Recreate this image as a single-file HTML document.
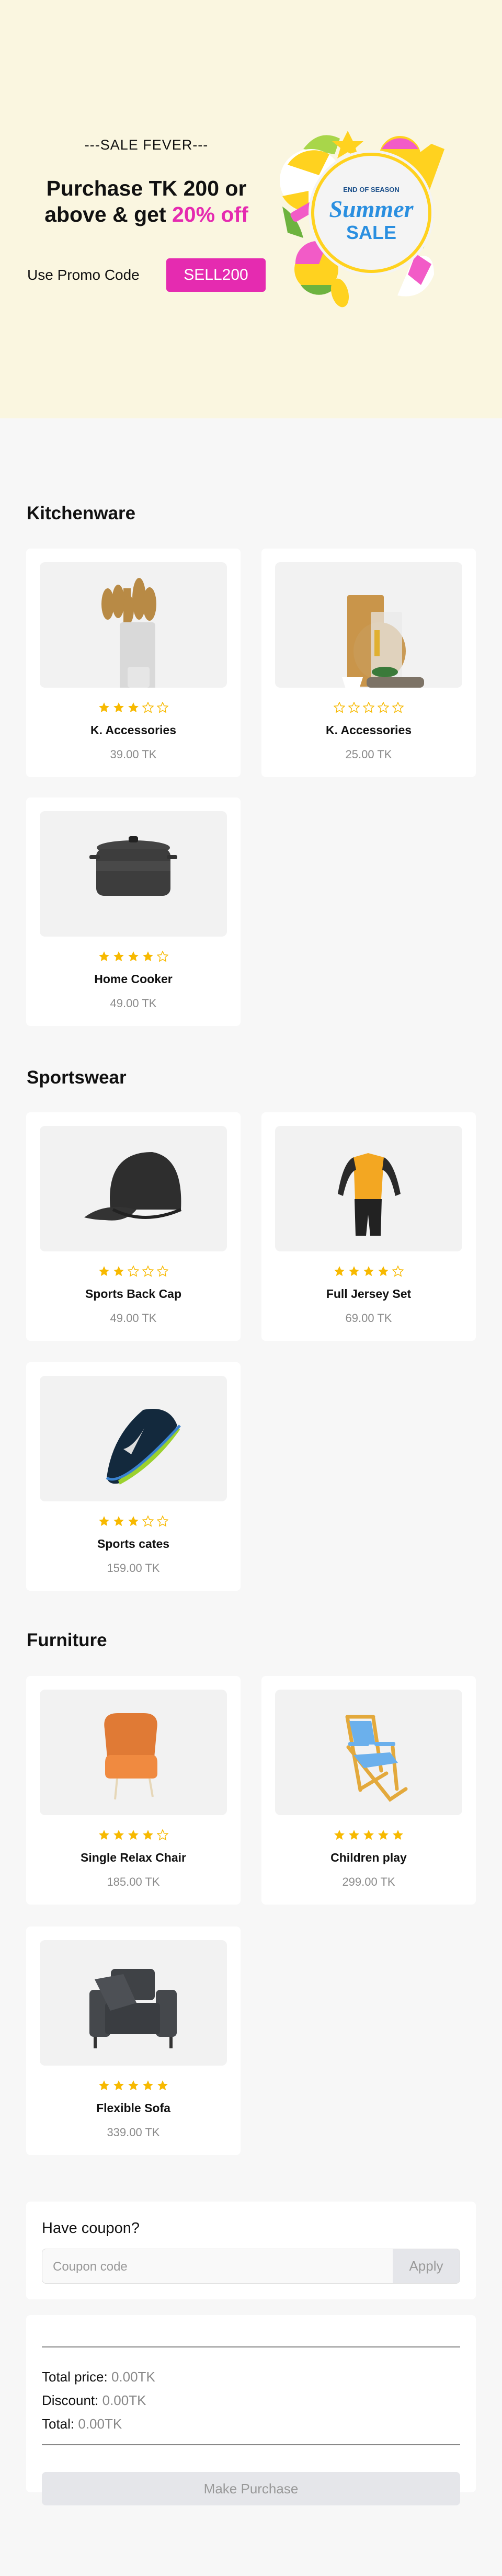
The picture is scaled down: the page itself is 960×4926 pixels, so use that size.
<!DOCTYPE html>
<html><head><meta charset="utf-8"><style>
*{box-sizing:border-box;margin:0;padding:0}
body{width:960px;height:4926px;background:#f7f7f7;font-family:"Liberation Sans",sans-serif;color:#111;position:relative;overflow:hidden}
.banner{position:absolute;left:0;top:0;width:960px;height:800px;background:#faf6e0}
.abs{position:absolute}
.card{position:absolute;width:410px;height:437px;background:#fff;border-radius:8px}
.card .img{position:absolute;left:26px;top:26px;width:358px;height:240px;background:#f2f2f2;border-radius:10px;overflow:hidden}
.card .img svg{position:absolute;left:0;top:0}
.stars{position:absolute;left:0;width:410px;top:293px;text-align:center;height:24px;font-size:0}
.stars svg{margin:0 3px}
.name{position:absolute;left:0;width:410px;top:334px;text-align:center;font-weight:bold;font-size:23px}
.price{position:absolute;left:0;width:410px;top:381px;text-align:center;font-size:22px;color:#8a8a8a}
h2{position:absolute;left:51px;font-size:35px;font-weight:bold;line-height:40px}
</style></head><body>
<div class="banner">
  <div class="abs" style="left:60px;top:262px;width:440px;text-align:center;font-size:27px;letter-spacing:1px">---SALE FEVER---</div>
  <div class="abs" style="left:40px;top:335px;width:480px;text-align:center;font-size:41px;font-weight:bold;line-height:50px">Purchase TK 200 or<br>above &amp; get <span style="color:#e52bb0">20% off</span></div>
  <div class="abs" style="left:52px;top:510px;font-size:28px">Use Promo Code</div>
  <div class="abs" style="left:318px;top:494px;width:190px;height:64px;background:#e52bb0;border-radius:6px;color:#fff;font-size:30px;text-align:center;line-height:64px">SELL200</div>
  <svg class="abs" style="left:530px;top:225px" width="360" height="365" viewBox="0 0 360 365">
    <path d="M50 60 q30-40 70-20 l-10 30z" fill="#a8d64a"/>
    <path d="M220 220 q60 10 80 -30 l-20 60z" fill="#a8d64a"/>
    <path d="M10 170 q30 20 40 60 l-30-10z" fill="#6db33f"/>
    <circle cx="65" cy="120" r="60" fill="#fff"/>
    <path d="M20 90 a60 60 0 0 1 80 -20 l-20 40z" fill="#ffd21f"/>
    <path d="M10 150 a60 60 0 0 0 50 30 l0-40z" fill="#ffd21f"/>
    <rect x="25" y="170" width="50" height="20" rx="6" fill="#f25bc7" transform="rotate(-30 50 180)"/>
    <circle cx="235" cy="75" r="40" fill="#ffd21f"/>
    <path d="M200 60 a40 40 0 0 1 70 0z" fill="#f25bc7"/>
    <path d="M255 80 l40-30 l25 10 l-40 110z" fill="#ffd21f"/>
    <circle cx="75" cy="290" r="42" fill="#ffd21f"/>
    <path d="M35 280 a42 42 0 0 1 60-40 l-15 40z" fill="#f25bc7"/>
    <path d="M45 320 a42 42 0 0 0 70 0z" fill="#6db33f"/>
    <path d="M260 270 q40-20 40 30 q-20 50-70 40z" fill="#fff"/>
    <path d="M265 260 l30 20 l-20 40 l-25-20z" fill="#f25bc7"/>
    <polygon points="135,25 145,45 165,45 150,58 156,78 135,66 115,78 121,58 105,45 125,45" fill="#ffd21f"/>
    <ellipse cx="120" cy="335" rx="16" ry="28" fill="#ffd21f" transform="rotate(-15 120 335)"/>
    <circle cx="180" cy="182" r="120" fill="#f4f4f4"/>
    <circle cx="180" cy="182" r="112" fill="none" stroke="#ffd21f" stroke-width="6"/>
    <text x="180" y="142" text-anchor="middle" font-family="Liberation Sans" font-weight="bold" font-size="13" fill="#1b4f8a">END OF SEASON</text>
    <text x="180" y="190" text-anchor="middle" font-family="Liberation Serif" font-style="italic" font-weight="bold" font-size="46" fill="#2a8fe0">Summer</text>
    <text x="180" y="232" text-anchor="middle" font-family="Liberation Sans" font-weight="bold" font-size="36" fill="#2a8fe0">SALE</text>
  </svg>
</div>

<svg width="0" height="0" style="position:absolute"><defs>
<path id="st" d="M10 1 L12.6 7 L19 7.5 L14.2 11.8 L15.6 18.3 L10 15 L4.4 18.3 L5.8 11.8 L1 7.5 L7.4 7z"/>
</defs></svg>

<!-- sections -->
<h2 style="top:962px">Kitchenware</h2>
<h2 style="top:2041px">Sportswear</h2>
<h2 style="top:3117px">Furniture</h2>

<div id="cards"></div>

<!-- Kitchenware -->
<div class="card" style="left:50px;top:1049px">
  <div class="img"><svg width="358" height="240"><g fill="#b88a45"><ellipse cx="130" cy="80" rx="12" ry="30"/><ellipse cx="150" cy="75" rx="12" ry="32"/><rect x="160" y="50" width="14" height="65"/><ellipse cx="190" cy="70" rx="13" ry="40"/><ellipse cx="210" cy="80" rx="13" ry="32"/><ellipse cx="170" cy="90" rx="10" ry="28"/></g><rect x="153" y="115" width="68" height="140" rx="6" fill="#d9d9d9"/><rect x="168" y="200" width="42" height="40" rx="5" fill="#e6e6e6"/></svg></div>
  <div class="stars" id="s1"></div><div class="name">K. Accessories</div><div class="price">39.00 TK</div>
</div>
<div class="card" style="left:500px;top:1049px">
  <div class="img"><svg width="358" height="240"><rect x="138" y="63" width="70" height="175" rx="4" fill="#c9954a"/><ellipse cx="200" cy="170" rx="50" ry="55" fill="#c99a55"/><rect x="183" y="95" width="60" height="140" rx="3" fill="#e9e9e9" opacity=".7"/><rect x="190" y="130" width="10" height="50" fill="#e0b030"/><rect x="175" y="220" width="110" height="20" rx="8" fill="#7d7366"/><path d="M128 220 h40 l-8 25 h-24z" fill="#fff"/><ellipse cx="210" cy="210" rx="25" ry="10" fill="#3a7a3a"/></svg></div>
  <div class="stars" id="s2"></div><div class="name">K. Accessories</div><div class="price">25.00 TK</div>
</div>
<div class="card" style="left:50px;top:1525px">
  <div class="img"><svg width="358" height="240"><ellipse cx="179" cy="70" rx="70" ry="14" fill="#444"/><rect x="108" y="72" width="142" height="90" rx="14" fill="#3d3d3d"/><rect x="95" y="84" width="20" height="8" rx="3" fill="#333"/><rect x="243" y="84" width="20" height="8" rx="3" fill="#333"/><rect x="170" y="48" width="18" height="12" rx="4" fill="#222"/><rect x="108" y="95" width="142" height="20" fill="#555" opacity=".5"/></svg></div>
  <div class="stars" id="s3"></div><div class="name">Home Cooker</div><div class="price">49.00 TK</div>
</div>

<!-- Sportswear -->
<div class="card" style="left:50px;top:2127px">
  <div class="img"><svg width="358" height="240"><path d="M135 160 q-10-110 80-110 q60 10 55 110z" fill="#2e2e2e"/><path d="M85 175 q40-30 100-15 q-20 25-60 20 q-20 0-40 -5z" fill="#333"/><path d="M140 160 q60 30 130 0" stroke="#222" stroke-width="6" fill="none"/></svg></div>
  <div class="stars" id="s4"></div><div class="name">Sports Back Cap</div><div class="price">49.00 TK</div>
</div>
<div class="card" style="left:500px;top:2127px">
  <div class="img"><svg width="358" height="240"><path d="M150 60 l28-8 l30 8 l-5 80 h-50z" fill="#f3a722"/><path d="M150 60 q-20 10 -30 70 l10 4 q10-45 25-50z" fill="#2a2a2a"/><path d="M208 60 q20 10 32 70 l-10 4 q-10-45 -25-50z" fill="#2a2a2a"/><path d="M152 140 h52 l-2 70 h-20 l-4-40 l-4 40 h-20z" fill="#222"/></svg></div>
  <div class="stars" id="s5"></div><div class="name">Full Jersey Set</div><div class="price">69.00 TK</div>
</div>
<div class="card" style="left:50px;top:2605px">
  <div class="img"><svg width="358" height="240"><path d="M128 195 q10-80 70-130 q50 -10 65 30 q-40 70 -110 110 q-20 5-25-10z" fill="#13293d"/><path d="M150 200 q60-40 115-105 l3 8 q-50 70-115 105z" fill="#9bd12e"/><path d="M160 140 q20 -5 40-40 l-25 50z" fill="#ddd"/><path d="M128 195 q30 20 140-100" stroke="#3a82d0" stroke-width="5" fill="none"/></svg></div>
  <div class="stars" id="s6"></div><div class="name">Sports cates</div><div class="price">159.00 TK</div>
</div>

<!-- Furniture -->
<div class="card" style="left:50px;top:3205px">
  <div class="img"><svg width="358" height="240"><path d="M124 75 q-5-30 25-30 h50 q30 0 25 30 l-5 55 h-90z" fill="#e07a35"/><path d="M135 125 h80 q10 0 10 15 v20 q0 10-10 10 h-80 q-10 0-10-10 v-20 q0-15 10-15z" fill="#f08a40"/><path d="M148 170 l-4 40" stroke="#e6d7b8" stroke-width="4"/><path d="M210 170 l6 35" stroke="#e6d7b8" stroke-width="4"/></svg></div>
  <div class="stars" id="s7"></div><div class="name">Single Relax Chair</div><div class="price">185.00 TK</div>
</div>
<div class="card" style="left:500px;top:3205px">
  <div class="img"><svg width="358" height="240"><g stroke="#e3a93c" stroke-width="7" fill="none" stroke-linecap="round"><path d="M138 52 l25 140"/><path d="M188 55 l15 100"/><path d="M140 52 h48"/><path d="M140 110 l80 100 l30-20"/><path d="M225 110 l8 80"/><path d="M163 190 l50-30"/></g><path d="M142 60 h42 l8 45 h-40z" fill="#6bb0ec"/><path d="M150 125 l70-5 l15 20 l-65 10z" fill="#6bb0ec"/><rect x="140" y="100" width="40" height="8" rx="3" fill="#6bb0ec"/><rect x="190" y="100" width="40" height="8" rx="3" fill="#6bb0ec"/></svg></div>
  <div class="stars" id="s8"></div><div class="name">Children play</div><div class="price">299.00 TK</div>
</div>
<div class="card" style="left:50px;top:3684px">
  <div class="img"><svg width="358" height="240"><rect x="136" y="55" width="84" height="60" rx="8" fill="#3f4246"/><rect x="95" y="95" width="40" height="90" rx="8" fill="#45484c"/><rect x="222" y="95" width="40" height="90" rx="8" fill="#45484c"/><rect x="125" y="120" width="105" height="60" rx="6" fill="#3a3d41"/><path d="M105 75 l55-10 l25 55 l-50 15z" fill="#4d5055"/><rect x="103" y="185" width="6" height="22" fill="#333"/><rect x="248" y="185" width="6" height="22" fill="#333"/></svg></div>
  <div class="stars" id="s9"></div><div class="name">Flexible Sofa</div><div class="price">339.00 TK</div>
</div>

<!-- coupon -->
<div class="abs" style="left:50px;top:4210px;width:860px;height:187px;background:#fff;border-radius:8px">
  <div class="abs" style="left:30px;top:35px;font-size:29px">Have coupon?</div>
  <div class="abs" style="left:30px;top:90px;width:800px;height:67px;border:1px solid #ddd;border-radius:8px;background:#f9f9f9;overflow:hidden">
    <div class="abs" style="left:20px;top:20px;font-size:24px;color:#999">Coupon code</div>
    <div class="abs" style="right:0;top:0;width:128px;height:67px;background:#e5e6ea;color:#999;font-size:26px;text-align:center;line-height:65px">Apply</div>
  </div>
</div>
<div class="abs" style="left:50px;top:4427px;width:860px;height:339px;background:#fff;border-radius:8px">
  <div class="abs" style="left:30px;top:60px;width:800px;height:2px;background:#888"></div>
  <div class="abs" style="left:30px;top:96px;font-size:26px;line-height:45px">Total price: <span style="color:#888">0.00TK</span><br>Discount: <span style="color:#888">0.00TK</span><br>Total: <span style="color:#888">0.00TK</span></div>
  <div class="abs" style="left:30px;top:247px;width:800px;height:2px;background:#888"></div>
</div>
<div class="abs" style="left:80px;top:4727px;width:800px;height:64px;background:#e5e6ea;border-radius:8px;color:#999;font-size:26px;text-align:center;line-height:64px">Make Purchase</div>

<script>
var counts=[3,0,4,2,4,3,4,5,5];
counts.forEach(function(c,i){
  var h='';
  for(var k=0;k<5;k++){
    h+= k<c ? '<svg width="22" height="22" viewBox="0 0 20 20"><use href="#st" fill="#f7b900"/></svg>'
            : '<svg width="22" height="22" viewBox="0 0 20 20"><use href="#st" fill="none" stroke="#f7b900" stroke-width="1.3"/></svg>';
  }
  document.getElementById('s'+(i+1)).innerHTML=h;
});
</script>
</body></html>
